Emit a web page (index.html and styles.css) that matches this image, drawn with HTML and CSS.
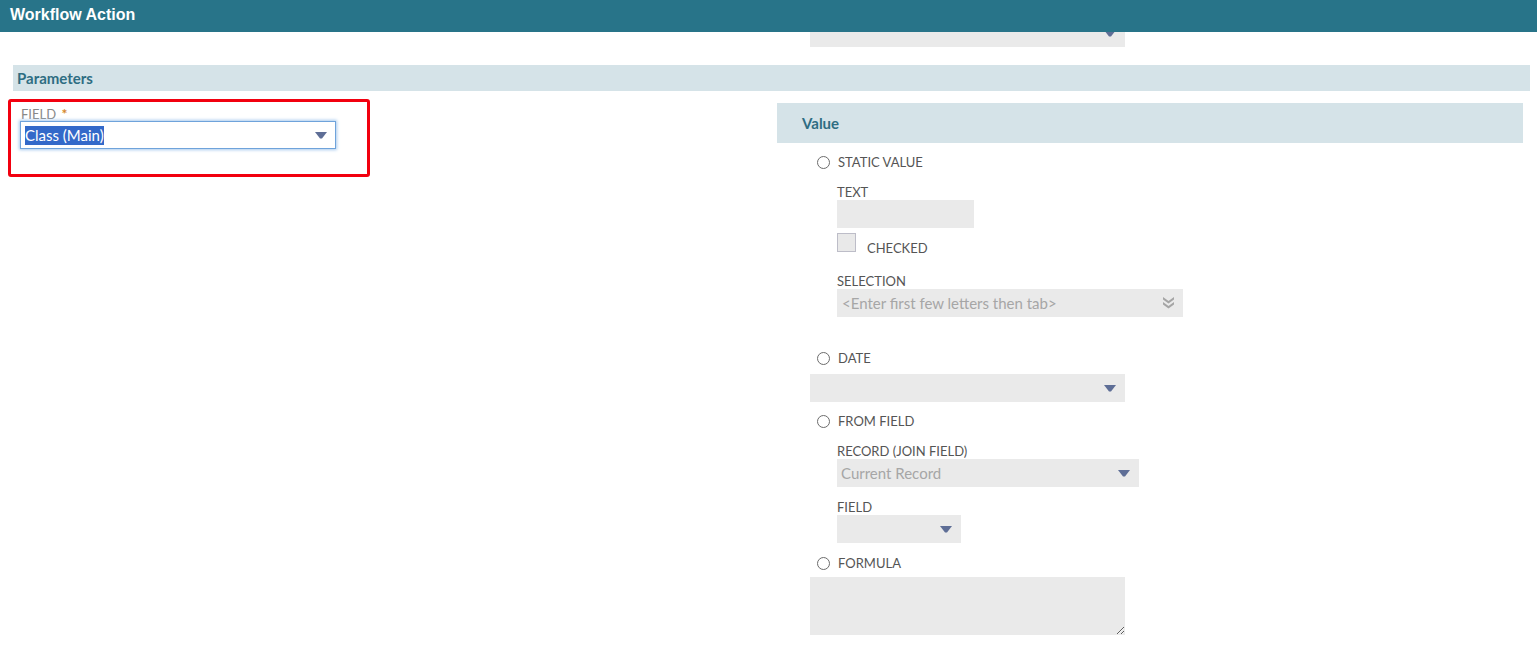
FILE: index.html
```html
<!DOCTYPE html>
<html lang="en">
<head>
  <meta charset="UTF-8" />
  <title>Workflow Action</title>
  <link rel="stylesheet" href="styles.css">
</head>
<body>
  <div class="topbar">Workflow Action</div>

  <div class="page">
    <div class="peek-row">
      <div class="select select-wide">
        <svg class="arrow" width="12" height="7" viewBox="0 0 12 7"><path d="M0 0 H12 L7 6.5 H5 Z" /></svg>
      </div>
    </div>

    <div class="section-bar">Parameters</div>

    <div class="columns">
      <div class="left-col">
        <div class="highlight-box">
          <div class="label">FIELD <span class="req">*</span></div>
          <div class="select select-focus">
            <span class="picked">Class (Main)</span>
            <svg class="arrow" width="12" height="7" viewBox="0 0 12 7"><path d="M0 0 H12 L7 6.5 H5 Z" /></svg>
          </div>
        </div>
      </div>

      <div class="right-col">
        <div class="value-head">Value</div>

        <div class="radio-row first">
          <span class="radio"></span><span class="label">STATIC VALUE</span>
        </div>
        <div class="sub">
          <div class="label label-top">TEXT</div>
          <div class="input input-text"></div>
          <div class="check-row">
            <span class="checkbox"></span><span class="label">CHECKED</span>
          </div>
          <div class="label label-sel">SELECTION</div>
          <div class="select select-lookup">
            <span class="placeholder">&lt;Enter first few letters then tab&gt;</span>
            <svg class="chevrons" width="13" height="13" viewBox="0 0 13 13">
              <path d="M1 1 L6.5 5 L12 1 V3.5 L6.5 7.5 L1 3.5 Z" />
              <path d="M1 6 L6.5 10 L12 6 V8.5 L6.5 12.5 L1 8.5 Z" />
            </svg>
          </div>
        </div>

        <div class="radio-row date">
          <span class="radio"></span><span class="label">DATE</span>
        </div>
        <div class="select select-wide select-date">
          <svg class="arrow" width="12" height="7" viewBox="0 0 12 7"><path d="M0 0 H12 L7 6.5 H5 Z" /></svg>
        </div>

        <div class="radio-row from">
          <span class="radio"></span><span class="label">FROM FIELD</span>
        </div>
        <div class="sub">
          <div class="label label-top">RECORD (JOIN FIELD)</div>
          <div class="select select-record">
            <span class="placeholder">Current Record</span>
            <svg class="arrow" width="12" height="7" viewBox="0 0 12 7"><path d="M0 0 H12 L7 6.5 H5 Z" /></svg>
          </div>
          <div class="label label-field">FIELD</div>
          <div class="select select-small">
            <svg class="arrow" width="12" height="7" viewBox="0 0 12 7"><path d="M0 0 H12 L7 6.5 H5 Z" /></svg>
          </div>
        </div>

        <div class="radio-row formula">
          <span class="radio"></span><span class="label">FORMULA</span>
        </div>
        <textarea class="formula-box"></textarea>
      </div>
    </div>
  </div>
</body>
</html>
```

FILE: styles.css
```css
body {
  margin: 0;
  background: #fff;
  font-family: Lato, "Noto Sans", sans-serif;
  overflow: hidden;
}
.topbar {
  position: fixed;
  top: 0;
  left: 0;
  right: 0;
  height: 32px;
  z-index: 5;
  background-color: rgb(40, 116, 137);
  color: #fff;
  font-family: "Liberation Sans", Arial, sans-serif;
  font-weight: bold;
  font-size: 16px;
  line-height: 29px;
  padding-left: 10px;
}
.page {
  padding-top: 19px;
}
.peek-row {
  padding-left: 810px;
}
.section-bar {
  margin: 18px 7px 0 13px;
  height: 26px;
  line-height: 26px;
  background-color: #d5e3e8;
  color: #2e6d82;
  font-weight: bold;
  font-size: 15px;
  padding-left: 4px;
}
.columns {
  display: flex;
  margin-top: 8px;
}
.left-col {
  width: 777px;
  flex: none;
  padding-left: 8px;
  box-sizing: border-box;
}
.highlight-box {
  width: 362px;
  height: 78px;
  box-sizing: border-box;
  border: 3px solid #f2000f;
  border-radius: 3px;
  padding: 5px 0 0 10px;
}
.label {
  font-size: 13px;
  line-height: 16px;
  color: #555;
}
.highlight-box .label {
  color: #888;
  line-height: 14px;
}
.req {
  color: #d4872a;
  font-weight: bold;
  font-size: 14px;
  margin-left: 2px;
}
.select {
  position: relative;
  height: 28px;
  background-color: #eaeaea;
  box-sizing: border-box;
}
.arrow {
  position: absolute;
  right: 9px;
  top: 11px;
  fill: #5e6e96;
}
.select-wide {
  width: 315px;
}
.select-focus {
  width: 316px;
  margin-left: -1px;
  background: #fff;
  border: 1px solid #6fa3db;
  box-shadow: 0 0 3px 1px #a9cbee;
  padding: 3px 0 0 4px;
}
.select-focus .arrow {
  right: 8px;
  top: 10px;
}
.picked {
  display: inline-block;
  background-color: #3369c9;
  color: #fff;
  font-size: 15px;
  line-height: 19px;
}
.right-col {
  width: 746px;
  flex: none;
}
.value-head {
  margin-top: 4px;
  height: 40px;
  line-height: 40px;
  background-color: #d5e3e8;
  color: #2e6d82;
  font-weight: bold;
  font-size: 15px;
  padding-left: 25px;
}
.radio-row {
  display: flex;
  align-items: center;
  padding-left: 40px;
  height: 16px;
}
.radio {
  width: 11px;
  height: 11px;
  border: 1px solid #6c6c6c;
  border-radius: 50%;
  margin-right: 8px;
  flex: none;
}
.radio-row.first {
  margin-top: 11px;
}
.radio-row.date {
  margin-top: 33px;
}
.radio-row.from {
  margin-top: 11px;
}
.radio-row.formula {
  margin-top: 12px;
}
.sub {
  padding-left: 60px;
}
.label-top {
  margin-top: 14px;
}
.input-text {
  width: 137px;
  height: 28px;
  background-color: #eaeaea;
}
.check-row {
  display: flex;
  align-items: flex-end;
  margin-top: 6px;
  height: 18px;
}
.checkbox {
  width: 17px;
  height: 17px;
  border: 1px solid #bdbdc8;
  background-color: #e9e9e9;
  margin-right: 11px;
}
.check-row .label {
  margin-bottom: -4px;
}
.label-sel {
  margin-top: 21px;
}
.select-lookup {
  width: 346px;
  padding-left: 5px;
}
.placeholder {
  font-size: 15px;
  line-height: 28px;
  color: #a6a6a6;
}
.chevrons {
  position: absolute;
  right: 8px;
  top: 7px;
  fill: #a5a5a5;
}
.select-date {
  margin: 8px 0 0 33px;
}
.select-record {
  width: 302px;
  padding-left: 4px;
}
.label-field {
  margin-top: 12px;
}
.select-small {
  width: 124px;
}
.formula-box {
  display: block;
  margin: 6px 0 0 33px;
  width: 315px;
  height: 58px;
  box-sizing: border-box;
  border: none;
  background-color: #eaeaea;
  resize: both;
  outline: none;
}
```
